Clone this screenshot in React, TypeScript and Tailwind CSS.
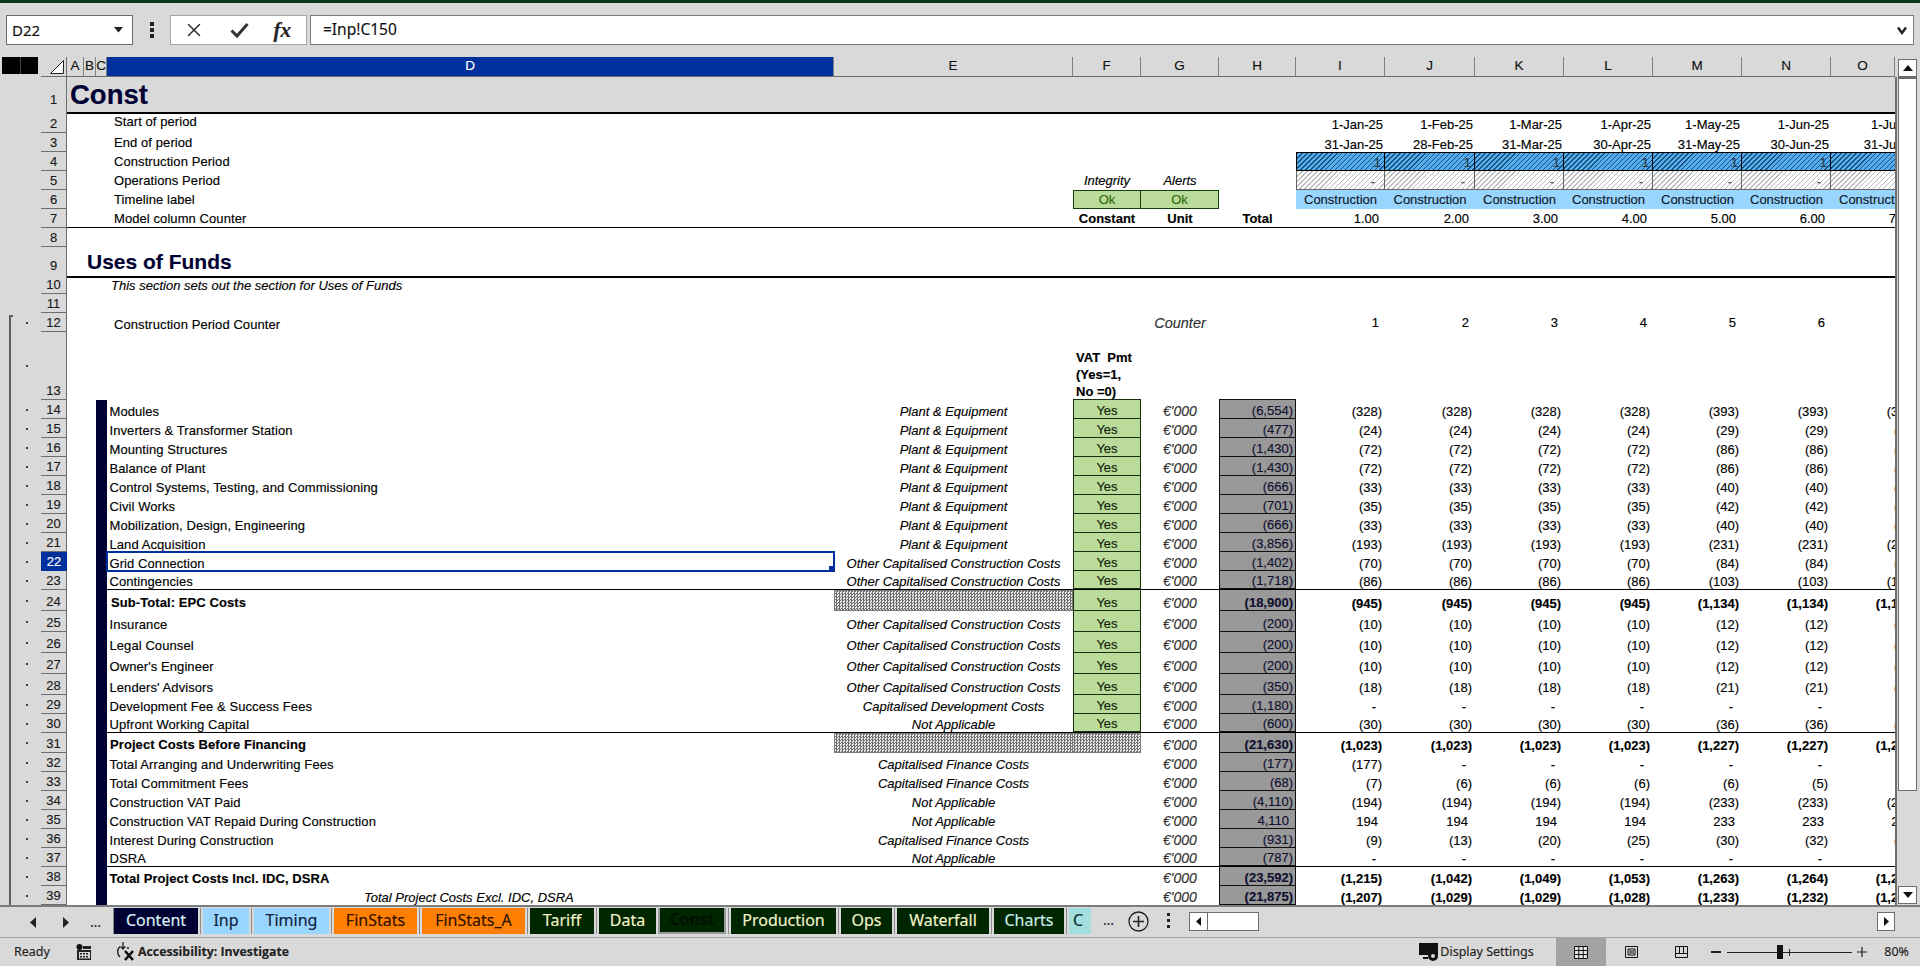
import React from "react";
import { X } from "lucide-react";

const TRACK = "grid-cols-[41px_26px_17px_12px_11px_727px_239px_68px_78px_77px_89px_90px_89px_89px_89px_89px_89px]";
const TXT = "flex whitespace-nowrap leading-[15px] text-[13px]";
const GREEN = "bg-[#bbdb9b]";
const CHECK = "bg-[conic-gradient(#6e6e6e_25%,#ececec_0_50%,#6e6e6e_0_75%,#ececec_0)] bg-[length:3px_3px]";
const BLUE_HATCH = "bg-[repeating-linear-gradient(135deg,#1d4f7c_0px,#1d4f7c_1px,#54aeee_1px,#54aeee_3.5px)]";
const GREY_HATCH = "bg-[repeating-linear-gradient(135deg,#bcbcbc_0px,#bcbcbc_1px,#ffffff_1px,#ffffff_3.5px)]";

type RowProps = {
  n: number;
  h: string;
  rowBg?: string;
  line?: string;
  lineD?: string;
  bar?: boolean;
  outline?: "none" | "top" | "line";
  a?: React.ReactNode;
  b?: React.ReactNode;
  d?: React.ReactNode;
  e?: React.ReactNode;
  f?: React.ReactNode;
  g?: React.ReactNode;
  t?: React.ReactNode;
  vals?: React.ReactNode[];
  sel?: boolean;
  dotCls?: string;
  numCls?: string;
};

function Row({ n, h, rowBg = "", line = "", lineD = "", bar, outline = "none", a, b, d, e, f, g, t, vals = [], sel, dotCls = "items-center", numCls = "" }: RowProps) {
  const l = line + " " + lineD;
  const slots = [0, 1, 2, 3, 4, 5, 6];
  return (
    <div className={`grid ${TRACK} ${h} ${rowBg}`}>
      <div className="flex bg-[#d9d9d9] pl-[9px]">
        <div className={outline === "none" ? "w-[4px]" : outline === "top" ? "w-[4px] mt-[2px] border-l-2 border-t-2 border-[#5f5f5f]" : "w-[4px] border-l-2 border-[#5f5f5f]"} />
        <div className={`flex ml-[13px] ${dotCls}`}>
          {outline !== "none" && <div className="w-[2px] h-[2px] bg-[#404040]" />}
        </div>
      </div>
      <div className={sel ? "flex items-end justify-center bg-[#00309c] text-white text-[13px] leading-[16px] pb-[1px]" : `flex items-end justify-center bg-[#d9d9d9] text-[#1a1a1a] border-b border-r border-[#6e6e6e] text-[13px] leading-[16px] ${numCls}`}>
        {n}
      </div>
      <div className={line}>{a}</div>
      <div className={line}>{b}</div>
      <div className={bar ? `bg-[#000033] ${line}` : line} />
      <div className={`relative ${l}`}>
        {d}
        {sel && (
          <div className="absolute -left-[1px] -right-[1px] -top-[1px] -bottom-[1px] border-2 border-[#00309c]">
            <div className="absolute -right-[2px] -bottom-[2px] w-[6px] h-[6px] bg-[#00309c]" />
          </div>
        )}
      </div>
      <div className={l}>{e}</div>
      <div className={l}>{f}</div>
      <div className={l}>{g}</div>
      <div className={l}>{t}</div>
      {slots.map((i) => (
        <div key={i} className={l}>
          {vals[i]}
        </div>
      ))}
    </div>
  );
}

const Label = ({ children, cls = "pl-[3px] items-end" }: { children: React.ReactNode; cls?: string }) => <div className={`${TXT} h-full ${cls}`}>{children}</div>;
const Cat = ({ children }: { children: React.ReactNode }) => <div className={`${TXT} h-full items-end justify-center italic`}>{children}</div>;
const Yes = () => <div className={`${TXT} h-full items-end justify-center ${GREEN} text-[#10240a] border-x border-b border-[#16300f]`}>Yes</div>;
const Unit = ({ top = "" }: { top?: string }) => <div className={`${TXT} h-full items-end justify-center italic text-[14px] text-[#333333] ${top}`}>€'000</div>;
const Total = ({ v, bold }: { v: string; bold?: boolean }) => (
  <div className={`${TXT} h-full items-end justify-end bg-[#999999] text-[#101030] border-x border-b border-[#111111] ${bold ? "font-bold pr-[2px]" : v.startsWith("(") ? "pr-[2px]" : "pr-[6px]"}`}>{v}</div>
);
const Val = ({ v, bold }: { v: string; bold?: boolean }) => (
  <div className={`${TXT} h-full items-end justify-end ${bold ? "font-bold" : ""} ${v === "-" ? "pr-[9px]" : v.startsWith("(") ? "pr-[3px]" : "pr-[7px]"}`}>{v}</div>
);

type Data = { n: number; h: string; label: string; cat?: string; tot: string; v: string[]; bold?: boolean; f?: "yes" | "hatch" | "none"; hatchE?: boolean; lineD?: string; sel?: boolean; labelCls?: string; dotCls?: string };

const H19 = "h-[19px]";
const H20 = "h-[20px]";
const H21 = "h-[21px]";
const LN = "border-b border-black";
const PE = "Plant & Equipment";
const OC = "Other Capitalised Construction Costs";
const CF = "Capitalised Finance Costs";
const NA = "Not Applicable";

const rep = (a: string, b: string, c: string) => [a, a, a, a, b, b, c];
const dash = ["-", "-", "-", "-", "-", "-", "-"];

const rows: Data[] = [
  { n: 14, h: H19, label: "Modules", cat: PE, tot: "(6,554)", v: rep("(328)", "(393)", "(393)") },
  { n: 15, h: H19, label: "Inverters & Transformer Station", cat: PE, tot: "(477)", v: rep("(24)", "(29)", "(29)") },
  { n: 16, h: H19, label: "Mounting Structures", cat: PE, tot: "(1,430)", v: rep("(72)", "(86)", "(86)") },
  { n: 17, h: H19, label: "Balance of Plant", cat: PE, tot: "(1,430)", v: rep("(72)", "(86)", "(86)") },
  { n: 18, h: H19, label: "Control Systems, Testing, and Commissioning", cat: PE, tot: "(666)", v: rep("(33)", "(40)", "(40)") },
  { n: 19, h: H19, label: "Civil Works", cat: PE, tot: "(701)", v: rep("(35)", "(42)", "(42)") },
  { n: 20, h: H19, label: "Mobilization, Design, Engineering", cat: PE, tot: "(666)", v: rep("(33)", "(40)", "(40)") },
  { n: 21, h: H19, label: "Land Acquisition", cat: PE, tot: "(3,856)", v: rep("(193)", "(231)", "(231)") },
  { n: 22, h: H19, label: "Grid Connection", cat: OC, tot: "(1,402)", v: rep("(70)", "(84)", "(84)"), sel: true },
  { n: 23, h: H19, label: "Contingencies", cat: OC, tot: "(1,718)", v: rep("(86)", "(103)", "(103)"), lineD: LN },
  { n: 24, h: H21, label: "Sub-Total: EPC Costs", tot: "(18,900)", v: rep("(945)", "(1,134)", "(1,134)"), bold: true, hatchE: true, labelCls: "pl-[4px] items-end pb-[1px]" },
  { n: 25, h: H21, label: "Insurance", cat: OC, tot: "(200)", v: rep("(10)", "(12)", "(12)") },
  { n: 26, h: H21, label: "Legal Counsel", cat: OC, tot: "(200)", v: rep("(10)", "(12)", "(12)") },
  { n: 27, h: H21, label: "Owner's Engineer", cat: OC, tot: "(200)", v: rep("(10)", "(12)", "(12)") },
  { n: 28, h: H21, label: "Lenders' Advisors", cat: OC, tot: "(350)", v: rep("(18)", "(21)", "(21)") },
  { n: 29, h: H19, label: "Development Fee & Success Fees", cat: "Capitalised Development Costs", tot: "(1,180)", v: dash },
  { n: 30, h: H19, label: "Upfront Working Capital", cat: NA, tot: "(600)", v: rep("(30)", "(36)", "(36)"), lineD: LN },
  { n: 31, h: H20, label: "Project Costs Before Financing", tot: "(21,630)", v: rep("(1,023)", "(1,227)", "(1,227)"), bold: true, hatchE: true, f: "hatch", labelCls: "pl-[3px] items-end pb-[1px]" },
  { n: 32, h: H19, label: "Total Arranging and Underwriting Fees", cat: CF, tot: "(177)", v: ["(177)", "-", "-", "-", "-", "-", "-"], f: "none" },
  { n: 33, h: H19, label: "Total Commitment Fees", cat: CF, tot: "(68)", v: ["(7)", "(6)", "(6)", "(6)", "(6)", "(5)", "(5)"], f: "none" },
  { n: 34, h: H19, label: "Construction VAT Paid", cat: NA, tot: "(4,110)", v: rep("(194)", "(233)", "(233)"), f: "none" },
  { n: 35, h: H19, label: "Construction VAT Repaid During Construction", cat: NA, tot: "4,110", v: rep("194", "233", "233"), f: "none" },
  { n: 36, h: H19, label: "Interest During Construction", cat: CF, tot: "(931)", v: ["(9)", "(13)", "(20)", "(25)", "(30)", "(32)", "(39)"], f: "none" },
  { n: 37, h: H19, label: "DSRA", cat: NA, tot: "(787)", v: dash, f: "none", lineD: LN },
  { n: 38, h: H19, label: "Total Project Costs Incl. IDC, DSRA", tot: "(23,592)", v: ["(1,215)", "(1,042)", "(1,049)", "(1,053)", "(1,263)", "(1,264)", "(1,264)"], bold: true, f: "none" },
  { n: 39, h: H19, label: "Total Project Costs Excl. IDC, DSRA", tot: "(21,875)", v: ["(1,207)", "(1,029)", "(1,029)", "(1,028)", "(1,233)", "(1,232)", "(1,232)"], bold: true, f: "none" },
];

const cols = [
  { c: "A", w: "w-[17px]" },
  { c: "B", w: "w-[12px]" },
  { c: "C", w: "w-[11px]" },
  { c: "D", w: "w-[727px]" },
  { c: "E", w: "w-[239px]" },
  { c: "F", w: "w-[68px]" },
  { c: "G", w: "w-[78px]" },
  { c: "H", w: "w-[77px]" },
  { c: "I", w: "w-[89px]" },
  { c: "J", w: "w-[90px]" },
  { c: "K", w: "w-[89px]" },
  { c: "L", w: "w-[89px]" },
  { c: "M", w: "w-[89px]" },
  { c: "N", w: "w-[89px]" },
  { c: "O", w: "w-[64px]" },
];

const months = ["1-Jan-25", "1-Feb-25", "1-Mar-25", "1-Apr-25", "1-May-25", "1-Jun-25", "1-Jul-25"];
const ends = ["31-Jan-25", "28-Feb-25", "31-Mar-25", "30-Apr-25", "31-May-25", "30-Jun-25", "31-Jul-25"];

const tabs = [
  { t: "Content", w: "w-[84px]", c: "bg-[#000033] text-[#dff3f5]" },
  { t: "Inp", w: "w-[46px]", c: "bg-[#99d6ff] text-[#10203a]" },
  { t: "Timing", w: "w-[75px]", c: "bg-[#99d6ff] text-[#10203a]" },
  { t: "FinStats", w: "w-[83px]", c: "bg-[#ff8000] text-[#301000]" },
  { t: "FinStats_A", w: "w-[103px]", c: "bg-[#ff8000] text-[#301000]" },
  { t: "Tariff", w: "w-[64px]", c: "bg-[#002600] text-[#f4f4cc]" },
  { t: "Data", w: "w-[57px]", c: "bg-[#002600] text-[#f4f4cc]" },
  { t: "Const", w: "w-[68px] -ml-[3px] border-x-2 border-b-2 border-[#9a9a9a] font-semibold", c: "bg-[#002600] text-[#001000]" },
  { t: "Production", w: "w-[105px]", c: "bg-[#002600] text-[#f4f4cc]" },
  { t: "Ops", w: "w-[51px]", c: "bg-[#002600] text-[#f4f4cc]" },
  { t: "Waterfall", w: "w-[92px]", c: "bg-[#002600] text-[#f4f4cc]" },
  { t: "Charts", w: "w-[70px]", c: "bg-[#002600] text-[#cdeef0]" },
];

function Hdr({ w, c }: { w: string; c: string }) {
  const sel = c === "D";
  return (
    <div className={`${w} h-full flex items-center justify-center text-[13.5px] border-r border-[#808080] ${sel ? "bg-[#00309c] text-white" : "text-[#111111]"}`}>{c}</div>
  );
}

export default function App() {
  return (
    <div className="w-[1920px] h-[966px] overflow-hidden flex flex-col bg-[#d9d9d9] font-['Liberation_Sans',sans-serif] text-black [-webkit-text-stroke:0.15px]">
      <div className="h-[3px] bg-[#0b3a18]" />
      {/* formula bar */}
      <div className="h-[54px] flex pt-[12px] pl-[6px] pr-[6px] font-['Noto_Sans',sans-serif]">
        <div className="w-[127px] h-[30px] bg-white border border-[#6e6e6e] flex items-center justify-between pl-[5px] pr-[9px] text-[15px] text-[#111111]">
          D22
          <svg width="9" height="6" viewBox="0 0 9 6"><path d="M0 0h9L4.5 5.5z" fill="#222" /></svg>
        </div>
        <div className="w-[37px] h-[30px] flex items-center justify-center">
          <svg width="4" height="16" viewBox="0 0 4 16"><rect x="0" y="0" width="4" height="4" fill="#222" /><rect x="0" y="6" width="4" height="4" fill="#222" /><rect x="0" y="12" width="4" height="4" fill="#222" /></svg>
        </div>
        <div className="w-[137px] h-[30px] bg-white border border-[#a6a6a6] flex items-center justify-between pl-[12px] pr-[15px]">
          <X size={22} strokeWidth={1.7} color="#333333" />
          <svg width="19" height="16" viewBox="0 0 19 16"><path d="M1.5 8.5L7 14 17.5 2" fill="none" stroke="#333333" strokeWidth="3" /></svg>
          <span className="font-['Liberation_Serif',serif] italic font-bold text-[21px] text-[#222222] leading-none">fx</span>
        </div>
        <div className="ml-[3px] flex-1 h-[30px] bg-white border border-[#7a7a7a] flex items-center justify-between pl-[12px] pr-[6px] text-[15.5px] text-[#111111]">
          =Inp!C150
          <svg width="10" height="9" viewBox="0 0 10 9"><path d="M1 1.5L5 7l4-5.5" fill="none" stroke="#222" strokeWidth="2.4" /></svg>
        </div>
      </div>
      {/* sheet */}
      <div className="h-[848px] flex">
        <div className="w-[1895px] overflow-hidden bg-white">
          {/* column header */}
          <div className="h-[20px] flex bg-[#d9d9d9]">
            <div className="w-[41px] pl-[2px]">
              <div className="w-[36px] h-[17px] flex gap-[1px] bg-[#444444]">
                <div className="flex-1 bg-black" />
                <div className="flex-1 bg-black" />
              </div>
            </div>
            <div className="w-[26px] h-full flex items-end justify-end pr-[2px] pb-[2px] border-r border-b border-[#6e6e6e]">
              <svg width="14" height="14" viewBox="0 0 14 14"><path d="M13.5.5v13H.5z" fill="#fff" stroke="#222" strokeWidth="1" /></svg>
            </div>
            <div className="flex-1 flex border-b border-[#6e6e6e] h-full">
              {cols.map((c) => (
                <Hdr key={c.c} w={c.w} c={c.c} />
              ))}
            </div>
          </div>
          <Row n={1} h="h-[36px]" numCls="pb-[5px]" rowBg="bg-[#d9d9d9]" line="border-b-2 border-black" a={<div className="pl-[3px] pt-[1px] font-bold text-[27.5px] leading-[34px] text-[#000033] whitespace-nowrap">Const</div>} />
          <Row
            n={2}
            h="h-[20px]"
            d={<Label cls="pl-[7px] pt-[1px] items-start tracking-[0.08px]">Start of period</Label>}
            vals={months.map((m) => (
              <Label key={m} cls="items-end justify-end pr-[2px] pb-[1px]">{m}</Label>
            ))}
          />
          <Row
            n={3}
            h="h-[19px]"
            d={<Label cls="pl-[7px] items-center tracking-[0.08px]">End of period</Label>}
            vals={ends.map((m) => (
              <Label key={m} cls="items-end justify-end pr-[2px]">{m}</Label>
            ))}
          />
          <Row
            n={4}
            h="h-[19px]"
            d={<Label cls="pl-[7px] items-center tracking-[0.08px]">Construction Period</Label>}
            vals={months.map((m, i) => (
              <div key={m} className={`${TXT} h-full items-end justify-end pr-[3px] text-[#2a3a48] border-y border-r border-black ${i === 0 ? "border-l" : ""} ${BLUE_HATCH}`}>1</div>
            ))}
          />
          <Row
            n={5}
            h="h-[19px]"
            d={<Label cls="pl-[7px] items-center tracking-[0.08px]">Operations Period</Label>}
            f={<div className={`${TXT} h-full items-center justify-center italic`}>Integrity</div>}
            g={<div className={`${TXT} h-full items-center justify-center italic`}>Alerts</div>}
            vals={months.map((m, i) => (
              <div key={m} className={`${TXT} h-full items-end justify-end pr-[9px] text-[#555555] border-r border-b border-[#666666] ${i === 0 ? "border-l" : ""} ${GREY_HATCH}`}>-</div>
            ))}
          />
          <Row
            n={6}
            h="h-[19px]"
            d={<Label cls="pl-[7px] items-center tracking-[0.08px]">Timeline label</Label>}
            f={<div className={`${TXT} h-full items-center justify-center ${GREEN} text-[#2e6b0c] border border-[#16400f]`}>Ok</div>}
            g={<div className={`${TXT} h-full items-center justify-center ${GREEN} text-[#2e6b0c] border border-l-0 border-[#16400f]`}>Ok</div>}
            vals={months.map((m) => (
              <div key={m} className={`${TXT} h-full items-center justify-center bg-[#99d6ff] text-[#101828]`}>Construction</div>
            ))}
          />
          <Row
            n={7}
            h="h-[19px]"
            line="border-b border-black"
            d={<Label cls="pl-[7px] items-center tracking-[0.08px]">Model column Counter</Label>}
            f={<Label cls="items-center justify-center font-bold">Constant</Label>}
            g={<Label cls="items-center justify-center font-bold">Unit</Label>}
            t={<Label cls="items-center justify-center font-bold">Total</Label>}
            vals={["1.00", "2.00", "3.00", "4.00", "5.00", "6.00", "7.00"].map((m) => (
              <Label key={m} cls="items-center justify-end pr-[6px]">{m}</Label>
            ))}
          />
          <Row n={8} h="h-[19px]" />
          <Row n={9} h="h-[28px]" numCls="pb-[3px]" line="border-b-2 border-black" b={<div className="pl-[3px] pt-[1px] font-bold text-[21px] leading-[28px] text-[#000033] whitespace-nowrap">Uses of Funds</div>} />
          <Row n={10} h="h-[19px]" d={<Label cls="pl-[4px] pt-[2px] items-center italic">This section sets out the section for Uses of Funds</Label>} />
          <Row n={11} h="h-[19px]" />
          <Row
            n={12}
            h="h-[19px]"
            outline="top"
            d={<Label cls="pl-[7px] pt-[4px] items-center tracking-[0.08px]">Construction Period Counter</Label>}
            g={<div className={`${TXT} h-full pt-[2px] items-center justify-center italic text-[14.5px] text-[#333333]`}>Counter</div>}
            vals={["1", "2", "3", "4", "5", "6", "7"].map((m) => (
              <Label key={m} cls="items-center justify-end pr-[6px]">{m}</Label>
            ))}
          />
          <Row
            n={13}
            h="h-[68px]"
            outline="line"
            dotCls="items-start pt-[33px]"
            f={<div className="h-full flex items-end border-b border-[#16300f] pl-[3px]"><div className="whitespace-pre font-bold text-[13px] leading-[17px] -mb-[1px]">{"VAT  Pmt\n(Yes=1,\nNo =0)"}</div></div>}
            t={<div className="h-full border-b border-[#111111]" />}
          />
          {rows.map((r) => (
            <Row
              key={r.n}
              n={r.n}
              h={r.h}
              outline="line"
              bar
              sel={r.sel}
              lineD={r.lineD ?? ""}
              d={
                r.n === 39 ? (
                  <Label cls="pl-[257px] items-end italic">{r.label}</Label>
                ) : (
                  <Label cls={`${r.labelCls ?? "pl-[2.5px] items-end"} tracking-[0.08px] ${r.bold ? "font-bold" : ""}`}>{r.label}</Label>
                )
              }
              e={r.hatchE ? <div className={`h-full border border-[#7a7a7a] ${CHECK}`} /> : r.cat ? <Cat>{r.cat}</Cat> : null}
              f={r.f === "none" ? null : r.f === "hatch" ? <div className={`h-full border-y border-r border-[#7a7a7a] ${CHECK}`} /> : <Yes />}
              g={<Unit />}
              t={<Total v={r.tot} bold={r.bold} />}
              vals={r.v.map((v, i) => (
                <Val key={i} v={v} bold={r.bold} />
              ))}
            />
          ))}
        </div>
        {/* vertical scrollbar */}
        <div className="w-[25px] flex flex-col">
          <div className="h-[20px] pl-[3px] pt-[2px]">
            <div className="w-[19px] h-[18px] bg-white border border-[#6e6e6e] flex items-center justify-center">
              <svg width="10" height="6" viewBox="0 0 10 6"><path d="M5 0l5 6H0z" fill="#111" /></svg>
            </div>
          </div>
          <div className="flex-1 flex flex-col pl-[1px] border-l-2 border-[#6e6e6e]">
            <div className="w-[19px] h-[714px] bg-white border-x border-b border-[#6e6e6e] border-t-2" />
            <div className="flex-1" />
            <div className="w-[19px] h-[18px] mb-[1px] bg-white border border-[#6e6e6e] flex items-center justify-center">
              <svg width="10" height="6" viewBox="0 0 10 6"><path d="M5 6L0 0h10z" fill="#111" /></svg>
            </div>
          </div>
        </div>
      </div>
      {/* tab strip */}
      <div className="h-[33px] flex border-t-2 border-b border-[#7d7d7d] border-b-[#a3a3a3] font-['Noto_Sans',sans-serif]">
        <div className="w-[114px] flex items-center text-[#222222]">
          <svg className="ml-[30px]" width="6" height="11" viewBox="0 0 6 11"><path d="M6 0v11L0 5.5z" fill="#222" /></svg>
          <svg className="ml-[27px]" width="6" height="11" viewBox="0 0 6 11"><path d="M0 0v11l6-5.5z" fill="#222" /></svg>
          <span className="ml-[21px] text-[14px] leading-none">…</span>
        </div>
        <div className="flex items-start pt-[1px] h-full">
          <div className="w-[1px] h-[26px] -ml-[1px] bg-[#8c8c8c]" />
          {tabs.map((t) => (
            <React.Fragment key={t.t}>
              <div className={`${t.w} h-[26px] flex items-center justify-center text-[16px] leading-[22px] pb-[2px] ${t.c}`}>{t.t}</div>
              <div className="w-[1px] h-[26px] mx-[2px] bg-[#8c8c8c]" />
            </React.Fragment>
          ))}
          <div className="w-[22px] h-[26px] overflow-hidden flex items-center pl-[4px] pb-[2px] text-[16px] bg-[#a3dede] text-[#103030]">C</div>
        </div>
        <span className="ml-[12px] w-[14px] text-[14px] leading-[26px] text-[#222222]">…</span>
        <div className="ml-[11px] flex items-center h-[28px]">
          <svg width="21" height="21" viewBox="0 0 21 21"><circle cx="10.5" cy="10.5" r="9.5" fill="none" stroke="#222" strokeWidth="1.3" /><path d="M10.5 5v11M5 10.5h11" stroke="#222" strokeWidth="1.6" /></svg>
        </div>
        <div className="ml-[18px] flex items-center h-[28px]">
          <svg width="4" height="16" viewBox="0 0 4 16"><rect width="3" height="3" fill="#222" /><rect y="6" width="3" height="3" fill="#222" /><rect y="12" width="3" height="3" fill="#222" /></svg>
        </div>
        <div className="ml-[18px] mt-[5px] w-[70px] h-[19px] flex bg-white border border-[#6e6e6e]">
          <div className="w-[18px] border-r border-[#6e6e6e] flex items-center justify-center">
            <svg width="5" height="9" viewBox="0 0 5 9"><path d="M5 0v9L0 4.5z" fill="#111" /></svg>
          </div>
        </div>
        <div className="flex-1" />
        <div className="mr-[25px] mt-[5px] w-[18px] h-[19px] bg-white border border-[#6e6e6e] flex items-center justify-center">
          <svg width="5" height="9" viewBox="0 0 5 9"><path d="M0 0v9l5-4.5z" fill="#111" /></svg>
        </div>
      </div>
      {/* status bar */}
      <div className="flex-1 flex items-center font-['Noto_Sans',sans-serif] text-[12.5px] text-[#222222]">
        <span className="ml-[14px] w-[62px]">Ready</span>
        <svg width="16" height="16" viewBox="0 0 16 16">
          <circle cx="3.5" cy="3" r="3" fill="#111" />
          <path d="M7 2h8v3H7zM1 6h14v10H1z" fill="#222" />
          <path d="M3 8h11v6.5H3z" fill="#d9d9d9" />
          <path d="M4 9h2v1.5H4zM7 9h2v1.5H7zM10 9h2v1.5h-2zM4 12h2v1.5H4zM7 12h2v1.5H7zM10 12h2v1.5h-2z" fill="#222" />
        </svg>
        <svg className="ml-[23px]" width="20" height="20" viewBox="0 0 20 20">
          <path d="M5 4.5A7 7 0 0 0 5 15" fill="none" stroke="#222" strokeWidth="1.4" />
          <path d="M8 0v7M5.5 4.5l2.5 2.5 2.5-2.5M12 6h2" fill="none" stroke="#222" strokeWidth="1.3" />
          <path d="M10 9l8 9M18 9l-8 9" stroke="#111" strokeWidth="2.6" />
        </svg>
        <span className="ml-[3px] font-bold text-[12.3px] font-['Open_Sans',sans-serif]">Accessibility: Investigate</span>
        <div className="flex-1" />
        <svg width="20" height="20" viewBox="0 0 20 20">
          <path d="M0 1h19v12H0z" fill="#111" />
          <path d="M4 15h5v2H4z" fill="#111" />
          <circle cx="14" cy="14" r="5" fill="#111" />
          <circle cx="14" cy="14" r="2" fill="#d9d9d9" />
        </svg>
        <span className="ml-[1px] w-[116px]">Display Settings</span>
        <div className="w-[50px] h-full bg-[#a3a3a3] flex items-center justify-center">
          <svg width="14" height="13" viewBox="0 0 14 13"><path d="M.5.5h13v12H.5zM.5 4.5h13M.5 8.5h13M4.8.5v12M9.2.5v12" fill="#e6e6e6" stroke="#111" /></svg>
        </div>
        <div className="w-[50px] flex items-center justify-center">
          <svg width="13" height="12" viewBox="0 0 13 12"><path d="M.5.5h12v11H.5zM3 3h7v6H3z" fill="none" stroke="#111" /><path d="M4 5h5M4 7h5" stroke="#111" /></svg>
        </div>
        <div className="w-[50px] flex items-center justify-center">
          <svg width="13" height="12" viewBox="0 0 13 12"><path d="M.5.5h12v11H.5z" fill="none" stroke="#111" /><path d="M4.5.5v7M8.5.5v7M.5 7.5h12" stroke="#111" /></svg>
        </div>
        <div className="ml-[5px] w-[10px] h-[1.5px] bg-[#222222]" />
        <div className="ml-[6px] w-[125px] h-[1px] bg-[#222222] flex items-center">
          <div className="ml-[50px] w-[6px] h-[14px] bg-[#111111]" />
          <div className="ml-[6px] w-[1px] h-[7px] bg-[#222222]" />
        </div>
        <svg className="ml-[5px]" width="10" height="10" viewBox="0 0 10 10"><path d="M5 0v10M0 5h10" stroke="#222" strokeWidth="1.2" /></svg>
        <span className="ml-[17px] mr-[11px]">80%</span>
      </div>
    </div>
  );
}
